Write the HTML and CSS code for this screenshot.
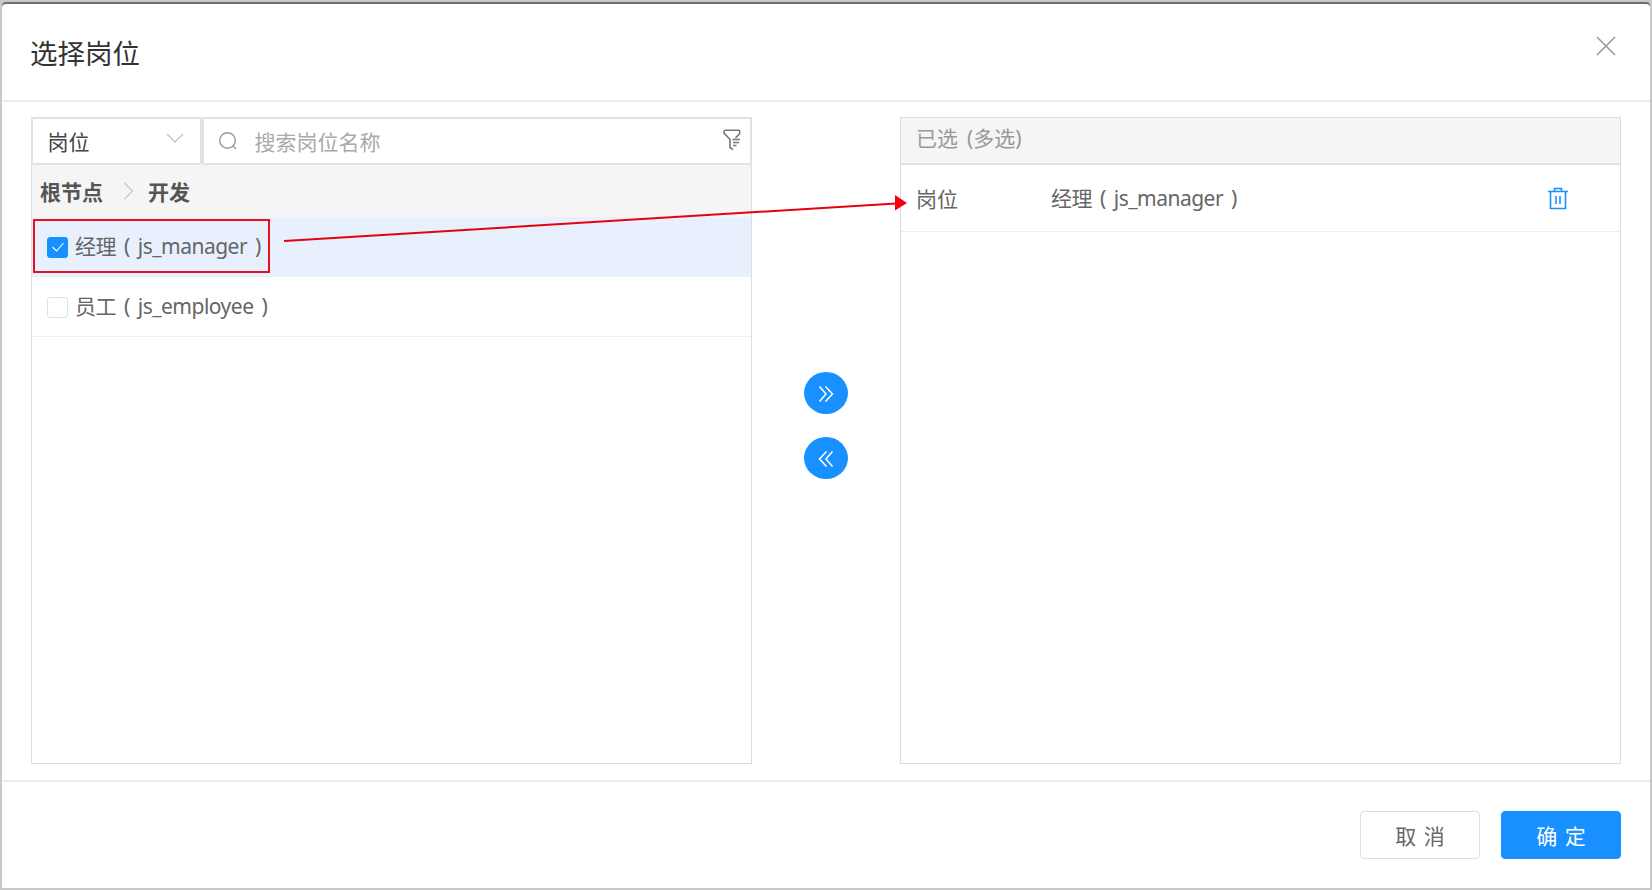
FILE: index.html
```html
<!DOCTYPE html>
<html lang="zh-CN">
<head>
<meta charset="utf-8">
<title>选择岗位</title>
<link rel="stylesheet" href="styles.css">
</head>
<body>
<div class="dialog">
  <header class="dlg-head">
    <h1 class="dlg-title">选择岗位</h1>
    <svg class="close" width="20" height="20" viewBox="0 0 20 20"><path d="M1 1l18 18M19 1L1 19" fill="none" stroke="#999" stroke-width="1.6"/></svg>
  </header>
  <main class="dlg-body">
    <section class="panel">
      <div class="search-row">
        <div class="select"><span>岗位</span>
          <svg width="18" height="10" viewBox="0 0 18 10"><path d="M1 1l8 8 8-8" fill="none" stroke="#c4c4c4" stroke-width="1.4"/></svg>
        </div>
        <div class="search">
          <svg width="20" height="20" viewBox="0 0 20 20"><circle cx="9.5" cy="9.5" r="7.8" fill="none" stroke="#999" stroke-width="1.4"/><path d="M15 15l3 3" stroke="#999" stroke-width="1.4"/></svg>
          <span class="placeholder">搜索岗位名称</span>
          <svg class="filter" width="18" height="22" viewBox="0 0 18 22"><path d="M16.800 4.500V2.800a1.500 1.500 0 0 0-1.500-1.500H2.500A1.500 1.500 0 0 0 1 2.800v1.200l6 6.500v8l3 2.200M16.800 4.500L12.500 9" fill="none" stroke="#777" stroke-width="1.600"/><path d="M9.500 10.500h7.500M10 13.500h6M10 16.500h3.500" stroke="#777" stroke-width="1.500"/></svg>
        </div>
      </div>
      <nav class="crumbs"><b>根节点</b>
        <svg width="12" height="20" viewBox="0 0 12 20"><path d="M1.500 2l8 8-8 8" fill="none" stroke="#ccc" stroke-width="1.500"/></svg>
        <b>开发</b></nav>
      <div class="item selected">
        <span class="check on"><svg width="14" height="12" viewBox="0 0 14 12"><path d="M1.500 6l4 4 7-8" fill="none" stroke="#fff" stroke-width="1.100"/></svg></span>
        <span class="label">经理 ( js_manager )</span>
      </div>
      <div class="item">
        <span class="check"></span>
        <span class="label">员工 ( js_employee )</span>
      </div>
    </section>
    <div class="transfer">
      <button class="round"><svg class="chev" width="16" height="18" viewBox="0 0 16 18"><path d="M1.500 1.500L8 9l-6.500 7.500M7.500 1.500L14.500 9l-7 7.500" fill="none" stroke="#fff" stroke-width="1.500"/></svg></button>
      <button class="round"><svg class="chev" width="16" height="18" viewBox="0 0 16 18"><path d="M14.500 1.500L8 9l6.500 7.500M8.500 1.500L1.500 9l7 7.500" fill="none" stroke="#fff" stroke-width="1.500"/></svg></button>
    </div>
    <section class="panel right">
      <div class="right-head">已选 (多选)</div>
      <div class="chosen">
        <span class="kind">岗位</span>
        <span class="name label">经理 ( js_manager )</span>
        <svg class="trash" width="22" height="23" viewBox="0 0 22 23"><path d="M1 4.500h20M7.500 4.500V1.500h7v3M3.500 4.500v17h15v-17M9 9v8M13 9v8" fill="none" stroke="#1890ff" stroke-width="1.600"/></svg>
      </div>
    </section>
  </main>
  <footer class="dlg-foot">
    <button class="btn">取 消</button>
    <button class="btn primary">确 定</button>
  </footer>
  <div class="mark-box"></div>
  <svg class="mark-arrow" width="660" height="60" viewBox="0 0 660 60"><path d="M2 44L614 6.500" stroke="#e8000f" stroke-width="2" fill="none"/><path d="M613 -2L625 6L613 13.500Z" fill="#f5000f"/></svg>
</div>
</body>
</html>
```

FILE: styles.css
```css
* { box-sizing: border-box; }
html, body { margin: 0; height: 100%; }
body {
  width: 1652px; height: 890px; overflow: hidden;
  background: #c9c9c9;
  padding: 4px 2px 2px;
  font-family: "Noto Sans", "Noto Sans CJK SC", sans-serif;
  color: #666;
}
.dialog {
  position: relative;
  height: 100%;
  background: #fff;
  border-radius: 4px 4px 0 0;
  box-shadow: 0 -2px 0 #6e6e6e;
  display: flex;
  flex-direction: column;
}
.dlg-head {
  height: 98px;
  flex: none;
  border-bottom: 2px solid #ececec;
  padding: 0 30px 0 28px;
  display: flex;
  align-items: center;
  justify-content: space-between;
}
.dlg-title { margin: 3px 0 0; font-size: 27.500px; font-weight: 400; color: #333; line-height: 1.2; }
.close { margin-top: -12px; margin-right: 4px; }
.dlg-body {
  height: 680px;
  flex: none;
  padding: 15px 29px 15px 29px;
  display: flex;
  border-bottom: 2px solid #ececec;
}
.panel {
  width: 721px;
  height: 647px;
  border: 1.500px solid #dcdcdc;
  border-top: 0;
  flex: none;
  display: flex;
  flex-direction: column;
}
.search-row { display: flex; height: 48px; margin: 0 -1px 0 -1.500px; flex: none; }
.select, .search {
  border: 2px solid #e2e2e2;
  border-radius: 2px;
  background: #fff;
  display: flex;
  align-items: center;
}
.select {
  width: 171px; flex: none;
  padding: 0 16px 0 15px;
  justify-content: space-between;
  font-size: 21px; color: #444;
}
.select svg { margin-top: -7px; }
.search { flex: 1; padding: 0 9px 0 14px; }
.placeholder { flex: 1; margin-left: 17px; font-size: 21px; color: #aaa; }
.filter { margin-top: -2px; }
.crumbs {
  height: 52px; flex: none;
  background: #f5f5f5;
  padding: 0 0 1px 8px;
  display: flex; align-items: center;
  font-size: 21px; color: #555;
}
.crumbs b { font-weight: 700; }
.crumbs svg { margin: 0 13px 0 20px; }
.label { letter-spacing: -0.500px; word-spacing: 3px; line-height: 1.2; padding-top: 1px; }
.item {
  height: 60px; flex: none;
  padding-left: 15px;
  display: flex; align-items: center; gap: 7px;
  border-bottom: 1.500px solid #eee;
  font-size: 21px; color: #666;
}
.item.selected { background: #e8f0fd; border-bottom-color: #e8f0fd; }
.check {
  width: 21px; height: 21px;
  border: 1.500px solid #e0e0e0;
  border-radius: 3px;
  background: #fff;
  display: flex; align-items: center; justify-content: center;
  margin-top: 1px;
}
.check.on { background: #1890ff; border-color: #1890ff; }
.transfer {
  width: 148px; flex: none;
  display: flex; flex-direction: column; align-items: center;
  padding-top: 255px; gap: 23px;
}
.round {
  width: 44px; height: 42px; padding: 0;
  border: 0; border-radius: 50%;
  background: #1890ff;
  display: flex; align-items: center; justify-content: center;
}
.chev { margin-top: 2px; }
.right { border-top: 1.500px solid #dcdcdc; }
.right-head {
  height: 47px; flex: none;
  background: #f5f5f5;
  border-bottom: 2px solid #e2e2e2;
  padding: 0 0 8px 15px;
  display: flex; align-items: center;
  font-size: 21px; color: #999;
  word-spacing: 3.500px;
}
.chosen {
  height: 67px; flex: none;
  border-bottom: 1.500px solid #eee;
  padding: 0 51px 0 15px;
  display: flex; align-items: center;
  font-size: 21px; color: #666;
}
.kind { width: 135px; flex: none; margin-top: -1px; }
.name { flex: 1; }
.trash { flex: none; }
.dlg-foot {
  flex: 1;
  padding: 0 29px 0 0;
  display: flex; justify-content: flex-end; align-items: center; gap: 21px;
}
.btn {
  width: 120px; height: 48px; padding: 0;
  border: 1.500px solid #dedede; border-radius: 4px;
  background: #fff;
  font: 400 21px "Noto Sans CJK SC", sans-serif; color: #666;
  word-spacing: 3px;
}
.btn.primary { background: #1890ff; border-color: #1890ff; color: #fff; }
.mark-box {
  position: absolute; left: 31px; top: 215px;
  width: 237px; height: 54px;
  border: 2px solid #e8101c;
}
.mark-arrow { position: absolute; left: 280px; top: 193px; overflow: visible; }
```
